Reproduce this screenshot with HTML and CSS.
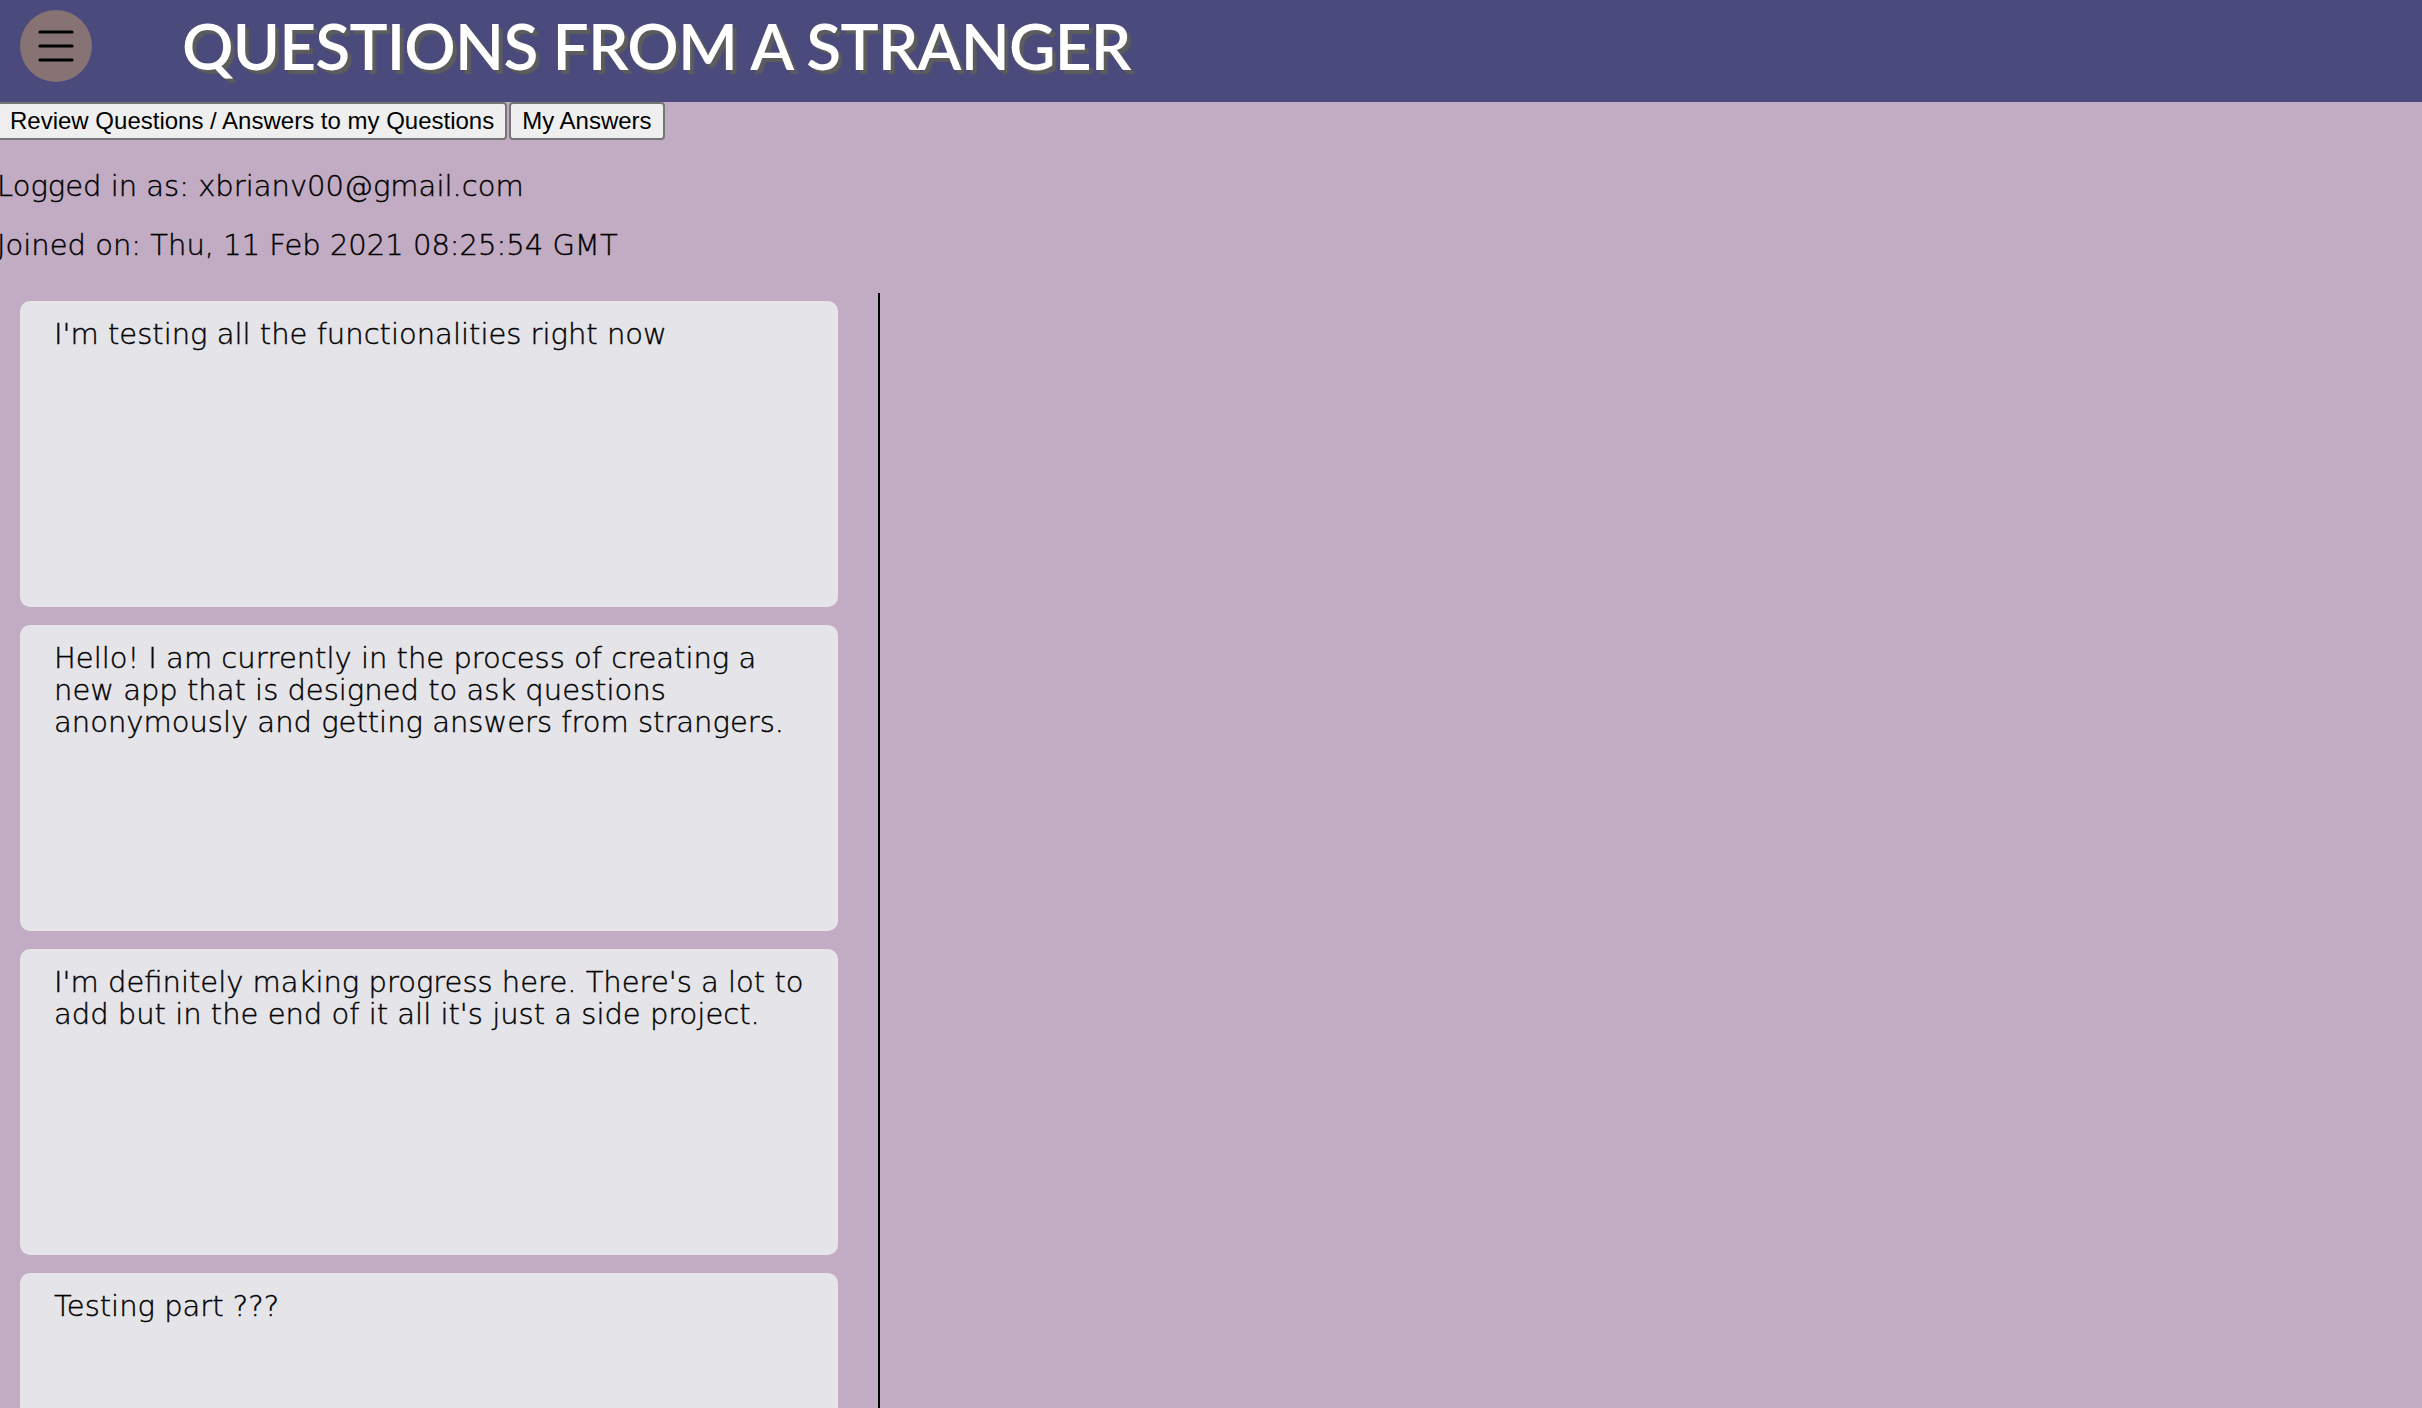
FILE: index.html
```html
<!DOCTYPE html>
<html lang="en">
<head>
<meta charset="utf-8">
<title>Questions From A Stranger</title>
<link rel="stylesheet" href="styles.css">
</head>
<body>
<header class="topbar">
  <button class="menu-btn" aria-label="Menu">
    <svg width="36" height="34" viewBox="0 0 36 34"><g stroke="#000" stroke-width="3.2" stroke-linecap="round"><line x1="2" y1="3" x2="34" y2="3"/><line x1="2" y1="17" x2="34" y2="17"/><line x1="2" y1="31" x2="34" y2="31"/></g></svg>
  </button>
  <h1 class="title">QUESTIONS FROM A STRANGER</h1>
</header>
<main class="page">
  <nav class="tabs">
    <button class="tab">Review Questions / Answers to my Questions</button>
    <button class="tab">My Answers</button>
  </nav>
  <section class="info">
    <p>Logged in as: xbrianv00@gmail.com</p>
    <p>Joined on: Thu, 11 Feb 2021 08:25:54 GMT</p>
  </section>
  <div class="content">
    <div class="list">
      <div class="card">I'm testing all the functionalities right now</div>
      <div class="card">Hello! I am currently in the process of creating a new app that is designed to ask questions anonymously and getting answers from strangers.</div>
      <div class="card">I'm definitely making progress here. There's a lot to add but in the end of it all it's just a side project.</div>
      <div class="card">Testing part ???</div>
    </div>
    <div class="detail"></div>
  </div>
</main>
</body>
</html>
```
FILE: styles.css
```css
html, body {
  margin: 0;
  padding: 0;
}
body {
  background: #c2acc3;
  font-family: "DejaVu Sans", "Open Sans", sans-serif;
  color: #000;
  height: 1408px;
  overflow: hidden;
}
.topbar {
  height: 92px;
  padding-bottom: 10px;
  background: #4a4a7c;
  display: flex;
  align-items: center;
}
.menu-btn {
  width: 72px;
  height: 72px;
  border-radius: 50%;
  background: #877373;
  border: none;
  margin-left: 20px;
  padding: 0;
  display: flex;
  align-items: center;
  justify-content: center;
}
.title {
  margin: 0 0 0 90px;
  font-family: "Lato", sans-serif;
  font-weight: 600;
  font-size: 64px;
  letter-spacing: -0.8px;
  color: #fff;
  text-shadow: 4px 4px 1px #5c5c5c;
  line-height: 1;
}
.page {
  margin-left: -3px;
}
.tabs {
  display: flex;
  gap: 2px;
}
.tab {
  font-family: "Liberation Sans", Arial, sans-serif;
  font-size: 24px;
  padding: 3px 11px;
  background: #efefef;
  border: 2px solid #767676;
  border-radius: 4px;
  color: #000;
}
.info {
  padding-top: 17px;
}
.info p {
  margin: 0;
  font-size: 29px;
  font-weight: 200;
  line-height: 59px;
  color: #000;
  -webkit-text-stroke: 0.4px #000;
}
.content {
  display: flex;
  margin-top: 18px;
  margin-left: 3px;
}
.list {
  width: 880px;
  border-right: 2px solid #000;
  padding: 8px 0 0 20px;
  box-sizing: border-box;
  display: flex;
  flex-direction: column;
  gap: 18px;
  height: 1200px;
}
.card {
  width: 818px;
  height: 306px;
  flex: none;
  box-sizing: border-box;
  background: #e5e4e9;
  border-radius: 10px;
  padding: 17px 20px 0 34px;
  font-size: 29px;
  font-weight: 200;
  line-height: 32px;
  color: #000;
  -webkit-text-stroke: 0.4px #000;
}
.detail {
  flex: 1;
}
```
